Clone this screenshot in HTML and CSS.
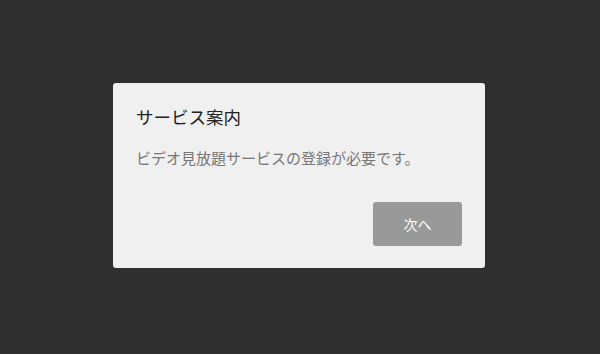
FILE: index.html
```html
<!DOCTYPE html>
<html lang="ja">
<head>
    <meta charset="UTF-8">
    <meta name="viewport" content="width=device-width, initial-scale=1.0">
    <title>サービス案内</title>
    <link rel="stylesheet" href="styles.css">
</head>
<body>
    <div class="overlay">
        <div class="dialog">
            <h2 class="dialog-title">サービス案内</h2>
            <p class="dialog-text">ビデオ見放題サービスの登録が必要です。</p>
            <div class="dialog-actions">
                <button type="button" class="btn-next">次へ</button>
            </div>
        </div>
    </div>
</body>
</html>
```

FILE: styles.css
```css
html, body {
    margin: 0;
    padding: 0;
    height: 100%;
}
body {
    background-color: #303030;
    font-family: 'Noto Sans CJK JP', 'Noto Sans', sans-serif;
}
.overlay {
    height: 100%;
    box-sizing: border-box;
    padding: 0 2px 3px 0;
    display: flex;
    align-items: center;
    justify-content: center;
}
.dialog {
    width: 372px;
    height: 185px;
    box-sizing: border-box;
    background-color: #f0f0f0;
    border-radius: 3px;
    padding: 22px 23px 22px 23px;
    display: flex;
    flex-direction: column;
}
.dialog-title {
    margin: 0;
    font-size: 17.5px;
    font-weight: normal;
    line-height: 24px;
    color: #222;
}
.dialog-text {
    margin: 19px 0 0;
    font-size: 15px;
    line-height: 20px;
    color: #777;
}
.dialog-actions {
    margin-top: auto;
    display: flex;
    justify-content: flex-end;
}
.btn-next {
    width: 89px;
    height: 44px;
    border: none;
    border-radius: 3px;
    background-color: #999;
    color: #fff;
    font-family: inherit;
    font-size: 14px;
    cursor: pointer;
}
```
